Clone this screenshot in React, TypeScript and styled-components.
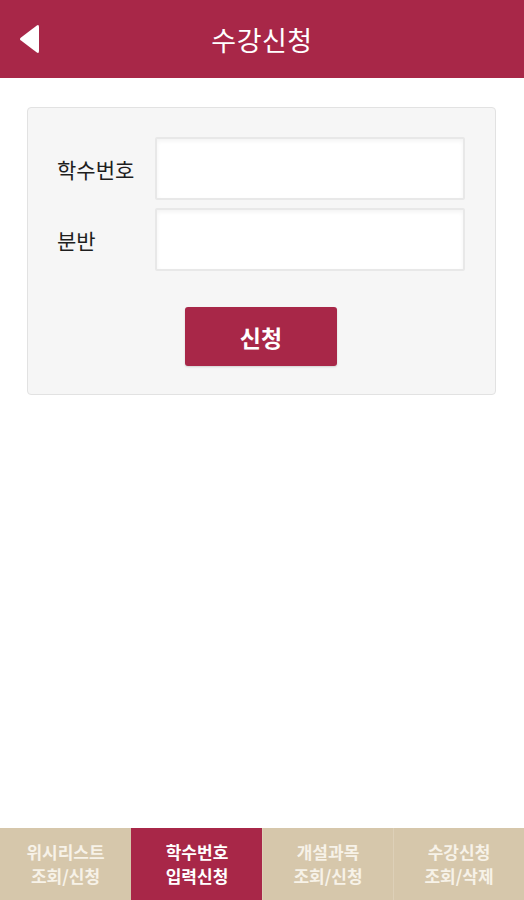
import React from "react";
import styled, { createGlobalStyle } from "styled-components";

const GlobalStyle = createGlobalStyle`
  html, body {
    margin: 0;
    padding: 0;
    background: #ffffff;
    font-family: "Noto Sans CJK KR", "Noto Sans", sans-serif;
  }
  * {
    box-sizing: border-box;
  }
`;

const tabs = [
  { top: "위시리스트", bottom: "조회/신청" },
  { top: "학수번호", bottom: "입력신청", active: true },
  { top: "개설과목", bottom: "조회/신청" },
  { top: "수강신청", bottom: "조회/삭제" },
];

const App = () => {
  return (
    <>
      <GlobalStyle />
      <Page>
        <Header>
          <BackButton aria-label="뒤로">
            <svg width="24" height="30" viewBox="0 0 24 30">
              <path
                d="M21 3 L21 27 Q21 30 18.5 28.3 L3 16.6 Q1 15 3 13.4 L18.5 1.7 Q21 0 21 3 Z"
                fill="#ffffff"
              />
            </svg>
          </BackButton>
          <Title>수강신청</Title>
        </Header>

        <Main>
          <Card>
            <FieldRow>
              <Label>학수번호</Label>
              <Input type="text" />
            </FieldRow>
            <FieldRow>
              <Label>분반</Label>
              <Input type="text" />
            </FieldRow>
            <ButtonRow>
              <SubmitButton>신청</SubmitButton>
            </ButtonRow>
          </Card>
        </Main>

        <TabBar>
          {tabs.map((t) => (
            <Tab key={t.top} $active={!!t.active}>
              <TabLine>{t.top}</TabLine>
              <TabLine>{t.bottom}</TabLine>
            </Tab>
          ))}
        </TabBar>
      </Page>
    </>
  );
};

export default App;

const Page = styled.div`
  height: 100vh;
  display: flex;
  flex-direction: column;
`;

const Header = styled.header`
  position: relative;
  height: 78px;
  background: #a82748;
  display: flex;
  align-items: center;
  justify-content: center;
  flex-shrink: 0;
`;

const BackButton = styled.button`
  position: absolute;
  left: 18px;
  top: 24px;
  border: none;
  background: none;
  padding: 0;
  display: flex;
  cursor: pointer;
`;

const Title = styled.h1`
  margin: 0;
  color: #ffffff;
  font-size: 27px;
  font-weight: 400;
  letter-spacing: 0.5px;
`;

const Main = styled.main`
  flex: 1;
  padding: 29px 28px 0 27px;
`;

const Card = styled.div`
  background: #f6f6f6;
  border: 1px solid #e2e2e2;
  border-radius: 4px;
  padding: 29px 30px 28px 29px;
  display: flex;
  flex-direction: column;
  gap: 8px;
`;

const FieldRow = styled.div`
  display: flex;
  align-items: center;
`;

const Label = styled.label`
  width: 98px;
  font-size: 21px;
  color: #1e1e1e;
  font-weight: 400;
`;

const Input = styled.input`
  flex: 1;
  height: 63px;
  background: #ffffff;
  border: 2px solid #e8e8e8;
  border-radius: 2px;
  box-shadow: inset 0 2px 4px rgba(0, 0, 0, 0.05);
  outline: none;
  font-size: 18px;
  padding: 0 12px;
`;

const ButtonRow = styled.div`
  display: flex;
  justify-content: center;
  margin-top: 28px;
`;

const SubmitButton = styled.button`
  width: 152px;
  height: 59px;
  background: #a82748;
  color: #ffffff;
  border: none;
  border-radius: 3px;
  font-family: inherit;
  font-size: 23px;
  font-weight: 700;
  box-shadow: 0 1px 2px rgba(0, 0, 0, 0.15);
  cursor: pointer;
`;

const TabBar = styled.nav`
  height: 72px;
  display: grid;
  grid-template-columns: repeat(4, 1fr);
  flex-shrink: 0;
`;

const Tab = styled.div<{ $active: boolean }>`
  display: flex;
  flex-direction: column;
  align-items: center;
  justify-content: center;
  background: ${(p) => (p.$active ? "#a82748" : "#d6c7ab")};
  color: ${(p) => (p.$active ? "#ffffff" : "#f7f2e8")};
  border-left: 1px solid ${(p) => (p.$active ? "#a82748" : "#ddd0b8")};
  &:first-child {
    border-left: none;
  }
`;

const TabLine = styled.span`
  display: block;
  font-size: 17px;
  font-weight: 700;
  line-height: 24px;
  height: 24px;
`;
